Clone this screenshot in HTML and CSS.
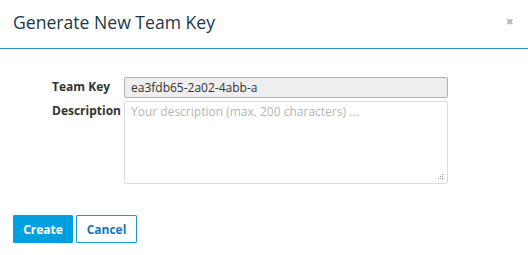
FILE: index.html
```html
<!DOCTYPE html>
<html lang="en">

<head>
  <meta charset="UTF-8">
  <title>Generate New Team Key</title>
  <link rel="stylesheet" href="styles.css">
</head>

<body>
  <div class="modal">
    <div class="modal-header">
      <h3 class="modal-title">Generate New Team Key</h3>
      <span class="close">&#x2716;</span>
    </div>

    <div class="modal-body">
      <div class="form-row">
        <label class="form-label">Team Key</label>
        <input type="text" class="form-input" value="ea3fdb65-2a02-4abb-a" readonly>
      </div>
      <div class="form-row">
        <label class="form-label label-desc">Description</label>
        <div class="textarea-wrap">
          <textarea class="form-textarea" placeholder="Your description (max. 200 characters) ..."></textarea>
          <!-- grip de redimensionado -->
          <svg class="grip" width="6" height="6" viewBox="0 0 6 6">
            <rect x="4" y="0" width="1" height="1" />
            <rect x="2" y="2" width="1" height="1" />
            <rect x="4" y="2" width="1" height="1" />
            <rect x="0" y="4" width="1" height="1" />
            <rect x="2" y="4" width="1" height="1" />
            <rect x="4" y="4" width="1" height="1" />
          </svg>
        </div>
      </div>
    </div>

    <div class="modal-footer">
      <button class="btn btn-primary">Create</button>
      <button class="btn btn-default">Cancel</button>
    </div>
  </div>
</body>

</html>
```

FILE: styles.css
```css
body {
  margin: 0;
  background: #fff;
  font-family: "Open Sans", Arial, sans-serif;
  color: #333;
}

.modal {
  width: 528px;
}

.modal-header {
  display: flex;
  align-items: center;
  justify-content: space-between;
  height: 48px;
  padding: 0 14px 0 13px;
  border-bottom: 1px solid #2b8dc3;
}

.modal-title {
  margin: 0;
  font-size: 17.6px;
  font-weight: normal;
  color: #1c3847;
  line-height: 1;
  padding-bottom: 2px;
}

.close {
  font-size: 9px;
  color: #b3b3b3;
  padding-bottom: 6px;
}

.modal-body {
  padding: 28px 0 0 52px;
  display: flex;
  flex-direction: column;
  gap: 3px;
}

.form-row {
  display: grid;
  grid-template-columns: 72px 324px;
  align-items: start;
}

.form-label {
  font-size: 12px;
  font-weight: bold;
  line-height: 20px;
  padding-top: 0;
}

.label-desc {
  padding-top: 0;
}

.form-input,
.form-textarea {
  box-sizing: border-box;
  display: block;
  width: 324px;
  margin: 0;
  font-family: "Open Sans", Arial, sans-serif;
  font-size: 12px;
  color: #333;
  border: 1px solid #c8c8c8;
  border-radius: 2px;
  padding: 2px 6px;
  outline: none;
}

.form-input {
  height: 21px;
  background: #eee;
  border-color: #b0b0b0;
}

.textarea-wrap {
  position: relative;
}

.form-textarea {
  height: 83px;
  border-color: #dcdce4;
  resize: none;
  line-height: 16px;
}

.form-textarea::placeholder {
  color: #b5b5b5;
}

.grip {
  position: absolute;
  right: 4px;
  bottom: 4px;
  fill: #9a9a9a;
}

.modal-footer {
  display: flex;
  gap: 3px;
  padding: 31px 0 0 13px;
}

.btn {
  box-sizing: border-box;
  height: 28px;
  padding: 0 8px;
  font-family: "Open Sans", Arial, sans-serif;
  font-size: 12px;
  font-weight: bold;
  border-radius: 1px;
  cursor: pointer;
}

.btn-primary {
  width: 60px;
  background: #00a0df;
  border: 1px solid #00a0df;
  color: #fff;
}

.btn-default {
  width: 61px;
  background: #fff;
  border: 1px solid #1c9ad8;
  color: #1a75b8;
}
```
